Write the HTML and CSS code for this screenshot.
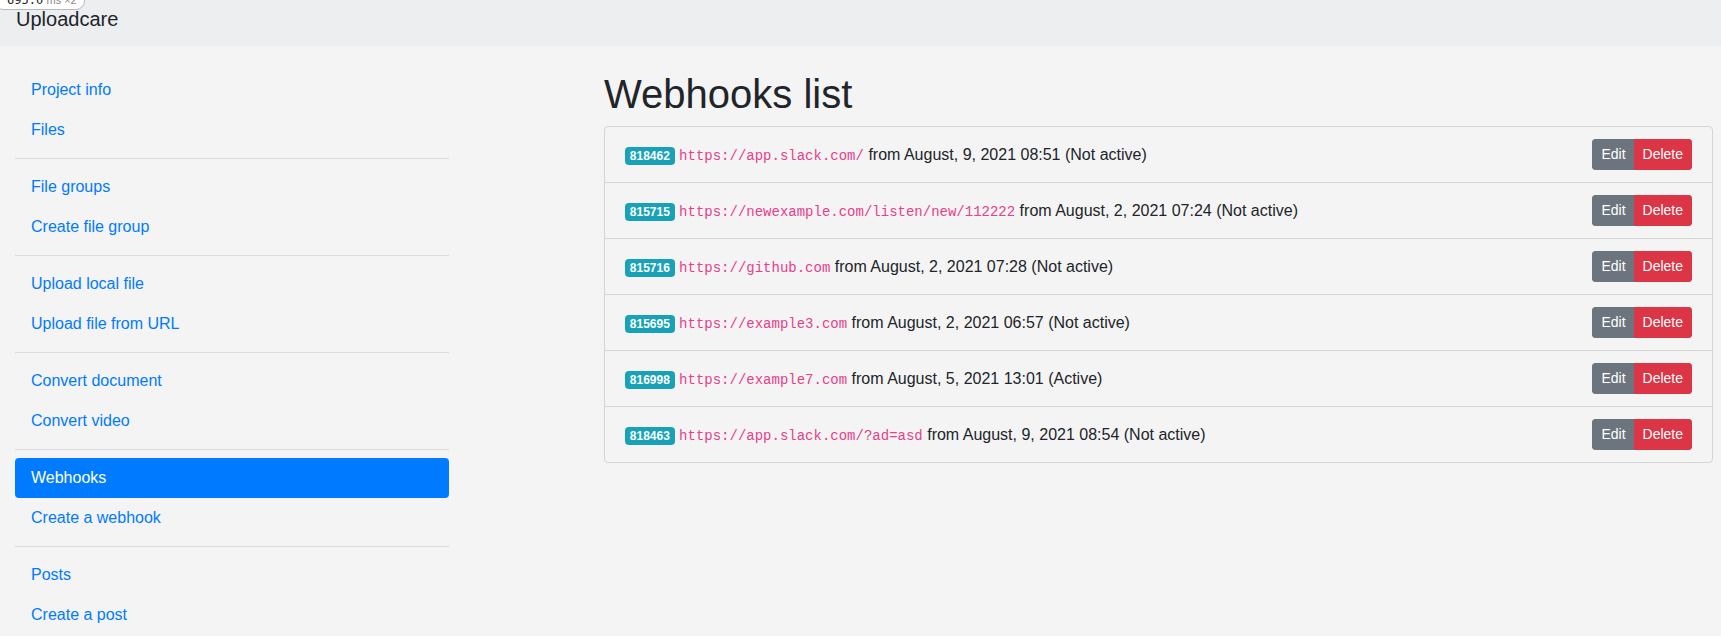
FILE: index.html
```html
<!DOCTYPE html>
<html lang="en">
<head>
<meta charset="utf-8">
<title>Webhooks list</title>
<link rel="stylesheet" href="styles.css">
</head>
<body>
<div class="debug-pill"><span class="debug-num">695.0</span> <span class="debug-unit">ms ×2</span></div>
<header class="topbar">
  <a class="brand">Uploadcare</a>
</header>
<div class="layout">
  <nav class="sidebar">
    <a class="nav-link">Project info</a>
    <a class="nav-link">Files</a>
    <div class="divider"></div>
    <a class="nav-link">File groups</a>
    <a class="nav-link">Create file group</a>
    <div class="divider"></div>
    <a class="nav-link">Upload local file</a>
    <a class="nav-link">Upload file from URL</a>
    <div class="divider"></div>
    <a class="nav-link">Convert document</a>
    <a class="nav-link">Convert video</a>
    <div class="divider"></div>
    <a class="nav-link active">Webhooks</a>
    <a class="nav-link">Create a webhook</a>
    <div class="divider"></div>
    <a class="nav-link">Posts</a>
    <a class="nav-link">Create a post</a>
  </nav>
  <main class="main">
    <h1 class="title">Webhooks list</h1>
    <ul class="list">
      <li class="item">
        <div class="info"><span class="badge">818462</span> <code class="url">https://app.slack.com/</code> from August, 9, 2021 08:51 (Not active)</div>
        <div class="btn-group"><button class="btn btn-edit">Edit</button><button class="btn btn-delete">Delete</button></div>
      </li>
      <li class="item">
        <div class="info"><span class="badge">815715</span> <code class="url">https://newexample.com/listen/new/112222</code> from August, 2, 2021 07:24 (Not active)</div>
        <div class="btn-group"><button class="btn btn-edit">Edit</button><button class="btn btn-delete">Delete</button></div>
      </li>
      <li class="item">
        <div class="info"><span class="badge">815716</span> <code class="url">https://github.com</code> from August, 2, 2021 07:28 (Not active)</div>
        <div class="btn-group"><button class="btn btn-edit">Edit</button><button class="btn btn-delete">Delete</button></div>
      </li>
      <li class="item">
        <div class="info"><span class="badge">815695</span> <code class="url">https://example3.com</code> from August, 2, 2021 06:57 (Not active)</div>
        <div class="btn-group"><button class="btn btn-edit">Edit</button><button class="btn btn-delete">Delete</button></div>
      </li>
      <li class="item">
        <div class="info"><span class="badge">816998</span> <code class="url">https://example7.com</code> from August, 5, 2021 13:01 (Active)</div>
        <div class="btn-group"><button class="btn btn-edit">Edit</button><button class="btn btn-delete">Delete</button></div>
      </li>
      <li class="item">
        <div class="info"><span class="badge">818463</span> <code class="url">https://app.slack.com/?ad=asd</code> from August, 9, 2021 08:54 (Not active)</div>
        <div class="btn-group"><button class="btn btn-edit">Edit</button><button class="btn btn-delete">Delete</button></div>
      </li>
    </ul>
  </main>
</div>
</body>
</html>
```

FILE: styles.css
```css
* { box-sizing: border-box; }

body {
  margin: 0;
  background: #f4f4f4;
  color: #212529;
  font-family: "Liberation Sans", Arial, sans-serif;
  font-size: 16px;
  line-height: 1.5;
}

.debug-pill {
  position: absolute;
  top: -9px;
  left: -6px;
  z-index: 5;
  height: 19px;
  padding: 0 7px 0 12px;
  background: #ffffff;
  border: 1px solid #b9b9b9;
  border-radius: 0 0 9px 9px;
  font-size: 12px;
  line-height: 17px;
  white-space: nowrap;
}
.debug-num {
  font-family: "DejaVu Sans Mono", "Liberation Mono", monospace;
  font-size: 12px;
  color: #222;
}
.debug-unit {
  font-size: 11px;
  color: #888;
}

.topbar {
  height: 46px;
  background: #eceef0;
  padding: 4px 16px 0;
}
.brand {
  font-size: 20px;
  line-height: 30px;
  color: #212529;
}

.layout {
  display: flex;
  justify-content: space-between;
  padding: 0 8px 0 15px;
}

.sidebar {
  flex: 0 0 434px;
  display: flex;
  flex-direction: column;
  padding-top: 24px;
}
.nav-link {
  display: block;
  padding: 8px 16px;
  color: #007bff;
  line-height: 24px;
  border-radius: 4px;
}
.nav-link.active {
  background: #007bff;
  color: #ffffff;
}
.divider {
  height: 1px;
  margin: 8px 0;
  background: #dcdcdc;
}

.main {
  flex: 0 0 1109px;
  padding-top: 24px;
}
.title {
  margin: 0 0 8px;
  font-size: 40px;
  font-weight: 500;
  line-height: 1.2;
}

.list {
  margin: 0;
  padding: 0;
  list-style: none;
  border: 1px solid rgba(0, 0, 0, 0.125);
  border-radius: 4px;
}
.item {
  display: flex;
  justify-content: space-between;
  align-items: center;
  padding: 12px 20px;
}
.item + .item {
  border-top: 1px solid rgba(0, 0, 0, 0.125);
}

.badge {
  display: inline-block;
  padding: 3px 4.8px;
  font-size: 12px;
  font-weight: 700;
  line-height: 1;
  color: #ffffff;
  background: #17a2b8;
  border-radius: 4px;
  vertical-align: baseline;
}
.url {
  font-family: "Liberation Mono", "Courier New", monospace;
  font-size: 14px;
  color: #e83e8c;
}

.btn-group {
  display: flex;
}
.btn {
  margin: 0;
  font-family: "Liberation Sans", Arial, sans-serif;
  font-size: 14px;
  line-height: 21px;
  padding: 4px 8px;
  border: 1px solid transparent;
  color: #ffffff;
  cursor: pointer;
}
.btn-edit {
  background: #6c757d;
  border-color: #6c757d;
  border-radius: 3px 0 0 3px;
}
.btn-delete {
  margin-left: -1px;
  background: #dc3545;
  border-color: #dc3545;
  border-radius: 0 3px 3px 0;
}
```
